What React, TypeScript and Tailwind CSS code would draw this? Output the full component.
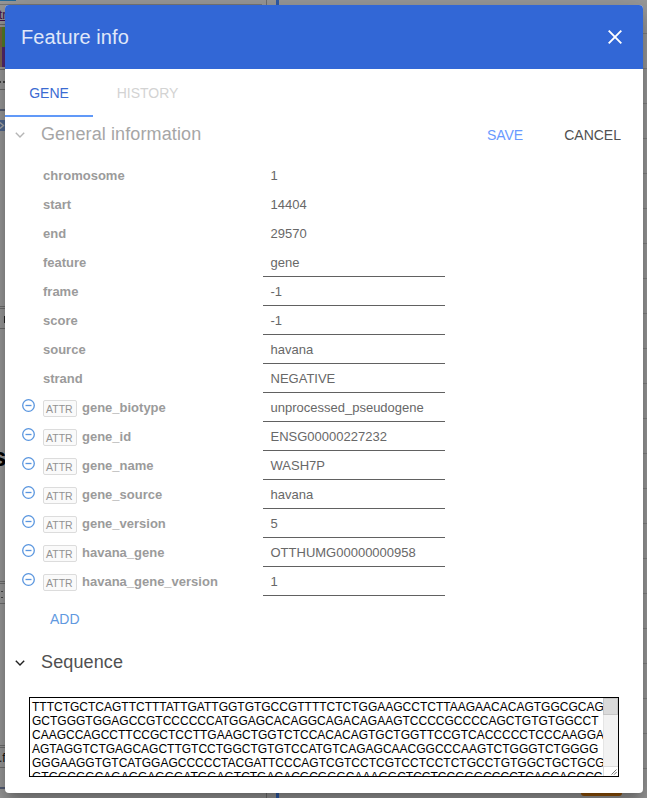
import React from "react";

type Field = { label: string; value: string; editable?: boolean; attr?: boolean };

const FIELDS: Field[] = [
  { label: "chromosome", value: "1" },
  { label: "start", value: "14404" },
  { label: "end", value: "29570" },
  { label: "feature", value: "gene", editable: true },
  { label: "frame", value: "-1", editable: true },
  { label: "score", value: "-1", editable: true },
  { label: "source", value: "havana", editable: true },
  { label: "strand", value: "NEGATIVE", editable: true },
  { label: "gene_biotype", value: "unprocessed_pseudogene", editable: true, attr: true },
  { label: "gene_id", value: "ENSG00000227232", editable: true, attr: true },
  { label: "gene_name", value: "WASH7P", editable: true, attr: true },
  { label: "gene_source", value: "havana", editable: true, attr: true },
  { label: "gene_version", value: "5", editable: true, attr: true },
  { label: "havana_gene", value: "OTTHUMG00000000958", editable: true, attr: true },
  { label: "havana_gene_version", value: "1", editable: true, attr: true },
];

const SEQUENCE = [
  "TTTCTGCTCAGTTCTTTATTGATTGGTGTGCCGTTTTCTCTGGAAGCCTCTTAAGAACACAGTGGCGCAG",
  "GCTGGGTGGAGCCGTCCCCCCATGGAGCACAGGCAGACAGAAGTCCCCGCCCCAGCTGTGTGGCCT",
  "CAAGCCAGCCTTCCGCTCCTTGAAGCTGGTCTCCACACAGTGCTGGTTCCGTCACCCCCTCCCAAGGA",
  "AGTAGGTCTGAGCAGCTTGTCCTGGCTGTGTCCATGTCAGAGCAACGGCCCAAGTCTGGGTCTGGGG",
  "GGGAAGGTGTCATGGAGCCCCCTACGATTCCCAGTCGTCCTCGTCCTCCTCTGCCTGTGGCTGCTGCG",
  "GTGGCGGCAGAGGAGGGATGGAGTCTGACACGCGGGCAAAGGCTCCTCCGGGCCCCTCACCAGCCC",
];

function Chevron({ className }: { className: string }) {
  return (
    <svg width="10" height="6" viewBox="0 0 10 6" fill="none" className={className}>
      <path d="M0.8 0.7 L5 4.9 L9.2 0.7" stroke="currentColor" strokeWidth="1.4" />
    </svg>
  );
}

function MinusCircle() {
  return (
    <svg width="13" height="13" viewBox="0 0 13 13" fill="none" className="text-[#5a96df]">
      <circle cx="6.5" cy="6.5" r="5.8" stroke="currentColor" strokeWidth="1.3" />
      <path d="M3.5 6.5 H9.5" stroke="currentColor" strokeWidth="1.3" />
    </svg>
  );
}

function Row({ field }: { field: Field }) {
  return (
    <div className="flex h-[29px]">
      <div className="flex w-[38px] pt-[6px] pl-[17px]">{field.attr && <MinusCircle />}</div>
      <div className="flex w-[220px] items-start gap-[5px] pt-[7px]">
        {field.attr && (
          <span className="h-[17px] w-[34px] rounded-[2px] border border-[#dcdcdc] bg-[#fafafa] pl-[2px] text-[10.5px] leading-[17px] text-[#929292]">
            ATTR
          </span>
        )}
        <span className="text-[13px] leading-[15px] font-bold text-[#9b9b9b]">{field.label}</span>
      </div>
      <div
        className={
          field.editable
            ? "w-[182px] border-b border-[#616161] pt-[7px] pl-[7.5px]"
            : "w-[182px] pt-[7px] pl-[7.5px]"
        }
      >
        <div className="text-[13px] leading-[15px] text-[#686868]">{field.value}</div>
      </div>
    </div>
  );
}

/* Sliver of the dimmed page left of the dialog: track rows of the genome browser. */
function LeftStrip() {
  return (
    <div className="flex w-[5px] shrink-0 flex-col overflow-hidden">
      <svg width="5" height="788" viewBox="0 5 5 788" fill="none" fontFamily="Liberation Sans, Arial, sans-serif">
        <text x="-1" y="19" fontSize="12" fill="#43134f">tr</text>
        <path d="M0 20.5 H5" stroke="#43134f" />
        <path d="M0 24.5 H5 M0 69.5 H5 M0 89.5 H5" stroke="#6b6b6b" />
        <path d="M0 27 H2 V47 H0 Z" fill="#80623f" />
        <path d="M2 27 H5 V47 H2 Z" fill="#567f29" />
        <path d="M0 47 H2 V67 H0 Z" fill="#806653" />
        <path d="M2 47 H5 V67 H2 Z" fill="#56296f" />
        <path d="M3 81 H5 V83 H3 Z M0 81 H1 V83 H0 Z" fill="#444" />
        <path d="M0 110 H5" stroke="#596075" strokeWidth="2" />
        <path d="M0 120 H5 V131 H0 Z" fill="#526990" />
        <path d="M0 122.5 L3.5 125.5 L0 128.5" stroke="#aaa" strokeWidth="1.4" />
        <path d="M0 306.5 H5 M0 308.5 H5 M0 328.5 H5" stroke="#6f6f6f" />
        <path d="M4.5 316 V323" stroke="#222" />
        <text x="-8" y="466" fontSize="26" fontWeight="bold" fill="#000">s</text>
        <path d="M0 581.5 H5 M0 583.5 H5 M0 603.5 H5" stroke="#6f6f6f" />
        <path d="M1 591.5 H3 M1 597.5 H3" stroke="#444" />
        <path d="M0 745.5 H5 M0 747.5 H5 M0 767.5 H5" stroke="#6f6f6f" />
        <text x="-1" y="762" fontSize="12" fill="#111">.f</text>
        <path d="M0 788 H5" stroke="#535c74" strokeWidth="2" />
      </svg>
    </div>
  );
}

/* Grid lines of the dimmed page right of the dialog. */
function RightStrip() {
  return (
    <div className="flex w-[4px] shrink-0 flex-col overflow-hidden pt-[28px]">
      {Array.from({ length: 22 }, (_, i) => (
        <div key={i} className="h-[35px] shrink-0 border-t border-[#808080]" />
      ))}
    </div>
  );
}

export default function App() {
  return (
    <div className="flex h-[798px] w-[647px] flex-col overflow-hidden bg-[#999999] font-['Liberation_Sans',Arial,sans-serif]">
      <div className="flex h-[5px] shrink-0">
        <div className="w-[262px] border-b border-[#777]">
          <div className="h-px w-[16px] bg-[#246c9a]" />
        </div>
        <div className="ml-[4px] w-px bg-[#707070]" />
        <div className="ml-[9px] w-[3px] bg-[#2f5ba8]" />
      </div>

      <div className="flex h-[788px] shrink-0">
        <LeftStrip />
        <div className="z-10 flex w-[638px] shrink-0 flex-col overflow-hidden rounded-[4px] bg-white shadow-[0_7px_9px_-4px_rgba(0,0,0,0.2),0_14px_21px_2px_rgba(0,0,0,0.14),0_5px_26px_4px_rgba(0,0,0,0.12)]">
          <header className="flex h-[64px] shrink-0 items-center justify-between bg-[#3267d6] pr-[21px] pl-[16px]">
            <h2 className="text-[20px] leading-[24px] tracking-[0.1px] text-[#e0e8f9]">Feature info</h2>
            <svg width="14" height="14" viewBox="0 0 14 14" fill="none">
              <path d="M0.7 0.7 L13.3 13.3 M13.3 0.7 L0.7 13.3" stroke="white" strokeWidth="1.9" />
            </svg>
          </header>

          <nav className="flex h-[48px] shrink-0 text-[14px] leading-[48px]">
            <div className="w-[88px] border-b-2 border-[#6199f8] text-center text-[#3b6bd2]">GENE</div>
            <div className="w-[109px] text-center text-[#d3d3d3]">HISTORY</div>
          </nav>

          <section>
            <div className="flex h-[44px] items-start gap-[16px] pt-[6px] pr-[22px] pl-[10px]">
              <Chevron className="mt-[9px] text-[#b5b5b5]" />
              <h3 className="text-[18px] leading-[22px] tracking-[0.12px] text-[#a6a6a6]">General information</h3>
              <div className="ml-auto flex gap-[41px] pt-[4px] text-[14px] leading-[16px]">
                <span className="text-[#699aff]">SAVE</span>
                <span className="text-[#505050]">CANCEL</span>
              </div>
            </div>
            {FIELDS.map((f) => (
              <Row key={f.label} field={f} />
            ))}
            <div className="h-[55px] pt-[15px] pl-[45px] text-[14px] leading-[16px] text-[#6199df]">ADD</div>
          </section>

          <section>
            <div className="flex h-[46px] items-start gap-[16px] pl-[10px]">
              <Chevron className="mt-[9px] text-[#202020]" />
              <h3 className="text-[18px] leading-[22px] tracking-[0.12px] text-[#505050]">Sequence</h3>
            </div>
            <div className="ml-[24px] flex h-[80px] w-[590px] overflow-hidden border border-black bg-white">
              <div className="w-[573px] shrink-0 pt-[2px] pl-[2px] text-[12px] leading-[14px] whitespace-pre text-black">
                {SEQUENCE.map((line) => (
                  <div key={line}>{line}</div>
                ))}
              </div>
              <div className="flex w-[15px] shrink-0 flex-col bg-[#f2f2f2]">
                <div className="h-[17px] border border-[#c6c6c6] bg-[#dadada]" />
                <div className="h-[51px] border-l border-[#e5e5e5]" />
                <div className="flex flex-1 items-end justify-end border-t border-l border-[#dcdcdc] bg-white p-px">
                  <svg width="6" height="6" viewBox="0 0 6 6" fill="none">
                    <path d="M0.5 5.5 L5.5 0.5 M3 5.7 L5.7 3" stroke="#666" strokeWidth="0.9" />
                  </svg>
                </div>
              </div>
            </div>
          </section>
        </div>
        <RightStrip />
      </div>

      <div className="flex h-[5px] shrink-0">
        <div className="ml-[266px] w-px bg-[#707070]" />
        <div className="ml-[9px] w-[3px] bg-[#2f5ba8]" />
        <div className="ml-[302px] h-[3px] w-[41px] rounded-b-[3px] bg-[#975407]" />
      </div>
    </div>
  );
}
